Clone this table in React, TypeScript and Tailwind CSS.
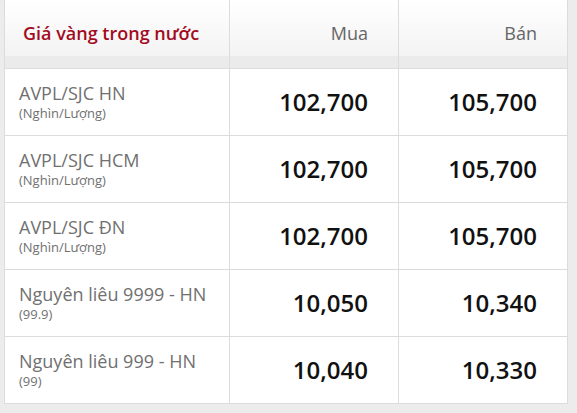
const rows = [
  { name: 'AVPL/SJC HN', unit: '(Nghìn/Lượng)', buy: '102,700', sell: '105,700' },
  { name: 'AVPL/SJC HCM', unit: '(Nghìn/Lượng)', buy: '102,700', sell: '105,700' },
  { name: 'AVPL/SJC ĐN', unit: '(Nghìn/Lượng)', buy: '102,700', sell: '105,700' },
  { name: 'Nguyên liêu 9999 - HN', unit: '(99.9)', buy: '10,050', sell: '10,340' },
  { name: 'Nguyên liêu 999 - HN', unit: '(99)', buy: '10,040', sell: '10,330' },
];

function HeadCell({ children, right }: { children: React.ReactNode; right?: boolean }) {
  return (
    <div className="flex h-[68px] flex-col bg-white">
      <div
        className={`flex h-[56px] items-center bg-gradient-to-b from-white to-[#f3f3f3] pt-[10px] ${
          right ? 'justify-end pr-[30px]' : 'pl-[18px]'
        }`}
      >
        {children}
      </div>
      <div className="h-[12px] bg-[#ebebeb]" />
    </div>
  );
}

export default function App() {
  return (
    <div
      className="min-h-[413px] w-[577px] bg-[#ececec] pl-[4px]"
      style={{ fontFamily: '"Open Sans", "Noto Sans", sans-serif' }}
    >
      <div className="grid w-[564px] grid-cols-[224px_168px_168px] gap-px bg-[#dcdcdc] px-px pb-px">
        <HeadCell>
          <span className="text-[18px] font-semibold leading-6 text-[#a30b1e]">Giá vàng trong nước</span>
        </HeadCell>
        <HeadCell right>
          <span className="text-[18px] leading-6 text-[#666]">Mua</span>
        </HeadCell>
        <HeadCell right>
          <span className="text-[18px] leading-6 text-[#666]">Bán</span>
        </HeadCell>

        {rows.map((r) => (
          <div key={r.name} className="contents">
            <div className="h-[66px] bg-white pl-[14px] pt-[12px]">
              <div className="text-[18px] leading-6 text-[#707070]">{r.name}</div>
              <div className="text-[13px] leading-4 text-[#707070]">{r.unit}</div>
            </div>
            <div className="flex h-[66px] items-center justify-end bg-white pr-[30px]">
              <span className="text-[24px] font-semibold text-[#111]">{r.buy}</span>
            </div>
            <div className="flex h-[66px] items-center justify-end bg-white pr-[30px]">
              <span className="text-[24px] font-semibold text-[#111]">{r.sell}</span>
            </div>
          </div>
        ))}
      </div>
    </div>
  );
}
